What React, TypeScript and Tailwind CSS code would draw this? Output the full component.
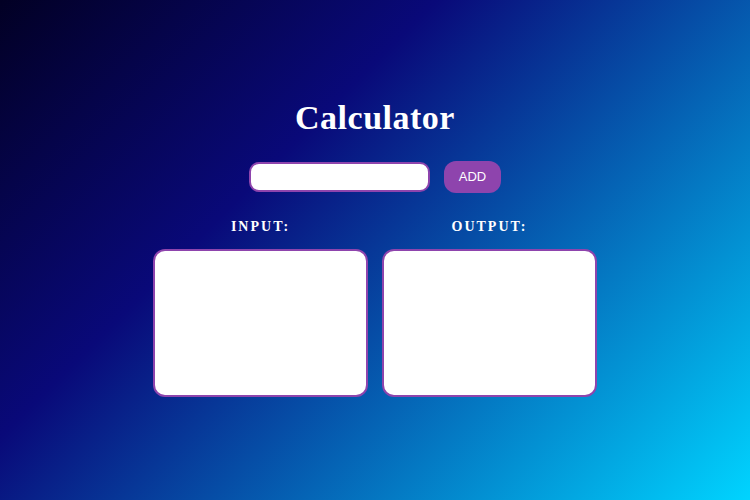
import React from "react";

export default function App() {
  return (
    <div className="h-screen w-full overflow-hidden bg-[linear-gradient(135deg,#020024_0%,#090979_35%,#00d4ff_100%)] flex flex-col items-center pt-[98px]">
      <h1 className="font-['Liberation_Serif',serif] font-bold text-white text-[34px] leading-[40px] tracking-[0.5px]">
        Calculator
      </h1>
      <div className="mt-[23px] flex items-center gap-[14px]">
        <input
          type="text"
          className="w-[181px] h-[30px] rounded-[10px] border-2 border-[#8e44ad] bg-white outline-none px-2"
        />
        <button className="w-[57px] h-[32px] rounded-[12px] bg-[#8e44ad] text-white text-[13px] font-['Liberation_Sans',sans-serif]">
          ADD
        </button>
      </div>
      <div className="mt-[24px] flex gap-[14px]">
        <div className="w-[215px] flex flex-col items-center">
          <div className="font-['Liberation_Serif',serif] font-bold text-white text-[14px] leading-[20px] tracking-[2px]">
            INPUT:
          </div>
          <div className="mt-[12px] w-[215px] h-[148px] rounded-[12px] border-2 border-[#8e44ad] bg-white" />
        </div>
        <div className="w-[215px] flex flex-col items-center">
          <div className="font-['Liberation_Serif',serif] font-bold text-white text-[14px] leading-[20px] tracking-[2px]">
            OUTPUT:
          </div>
          <div className="mt-[12px] w-[215px] h-[148px] rounded-[12px] border-2 border-[#8e44ad] bg-white" />
        </div>
      </div>
    </div>
  );
}
